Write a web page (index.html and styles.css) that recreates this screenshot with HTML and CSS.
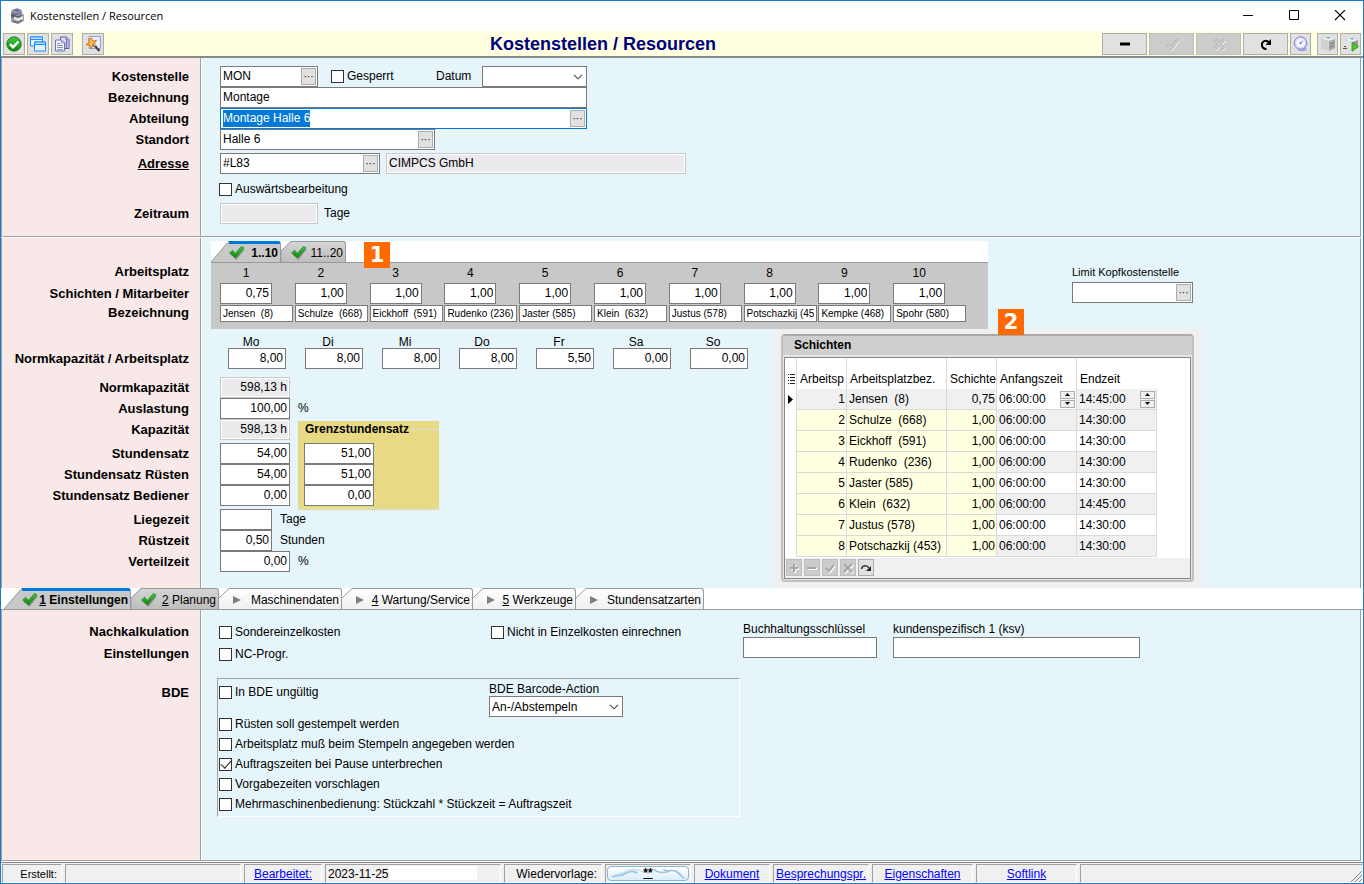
FILE: index.html
```html
<!DOCTYPE html>
<html lang="de">
<head>
<meta charset="utf-8">
<title>Kostenstellen / Resourcen</title>
<link rel="stylesheet" href="styles.css">
</head>
<body>
<svg class="defs" aria-hidden="true">
  <defs>
    <linearGradient id="green" x1="0" y1="0" x2="0" y2="1"><stop offset="0" stop-color="#3fc93f"/><stop offset="1" stop-color="#108410"/></linearGradient>
    <linearGradient id="pale" x1="0" y1="0" x2="0" y2="1"><stop offset="0" stop-color="#d4d4d4"/><stop offset="1" stop-color="#bebebe"/></linearGradient>
    <linearGradient id="light" x1="0" y1="0" x2="0" y2="1"><stop offset="0" stop-color="#ffffff"/><stop offset="1" stop-color="#efefef"/></linearGradient>
    <symbol id="tick" viewBox="0 0 16 16"><path d="M1 8.5 3.8 5.6 6.6 9 12.4 2 15.2 3.6 6.8 14Z" fill="#555" opacity=".45" transform="translate(.5 .9)"/><path d="M.6 8 3.6 5.2 6.4 8.4 12.4 1.4 15 2.8 6.600 13Z" fill="url(#green)" stroke="#1a8a1a" stroke-width=".7"/></symbol>
    <symbol id="play" viewBox="0 0 8 8"><path d="M0 0 8 4 0 8Z" fill="#808080"/></symbol>
    <symbol id="chevron" viewBox="0 0 10 6"><path d="M1 .8 5 4.8 9 .8" fill="none" stroke="#444" stroke-width="1.1"/></symbol>
    <symbol id="slant-wide" viewBox="0 0 20 21" preserveAspectRatio="none"><path d="M0 21 20 0V21Z" fill="#c8c8c8"/><path d="M0 21 20 0" stroke="#999" fill="none"/></symbol>
    <symbol id="slant-mid" viewBox="0 0 10 21"><path d="M0 21V10L10 0V21Z" fill="url(#pale)"/><path d="M0 21V10L10 .5" stroke="#999" fill="none"/></symbol>
    <symbol id="slant-light" viewBox="0 0 10 21"><path d="M0 21V10L10 0V21Z" fill="url(#light)"/><path d="M0 10 10 .5" stroke="#999" fill="none"/></symbol>
  </defs>
</svg>

<div class="window">
  <header class="titlebar">
    <svg class="app-icon" viewBox="0 0 16 16"><path d="M3 2 8 0l5 2v3l2 2v6l-6 3-7-2V4Z" fill="#a0a0a6"/><path d="m3 2 5-1 4 1-4 2Z" fill="#6a6ab0"/><path d="M3 4l5 1 4-1v2l-5 1-4-1Z" fill="#77779a"/><path d="M2 6h3l3 2 5-1v2l-5 2-6-2Z" fill="#606068"/><path d="M5 8.500l4 1.500 5-2v3l-5 2-4-2Z" fill="#e6e6e6"/><path d="m4 12.500 5 1 4-2v2l-4 2-5-1Z" fill="#77777d"/></svg>
    <span class="window-title">Kostenstellen / Resourcen</span>
    <button class="win-btn" aria-label="Minimieren"><svg viewBox="0 0 12 12"><path d="M1 5.500h10" stroke="#000"/></svg></button>
    <button class="win-btn" aria-label="Maximieren"><svg viewBox="0 0 12 12"><path d="M1.5.5h9v9h-9Z" fill="none" stroke="#000"/></svg></button>
    <button class="win-btn" aria-label="Schließen"><svg viewBox="0 0 12 12"><path d="m1 0 10 10M11 0 1 10" stroke="#000" stroke-width="1.1"/></svg></button>
  </header>

  <div class="toolbar">
    <div class="tools">
      <button class="tool" aria-label="OK"><svg viewBox="0 0 16 16"><circle cx="8" cy="8" r="7.2" fill="url(#green)" stroke="#0d720d" stroke-width=".8"/><path d="m4 8.2 3 3 5.4-5.6" fill="none" stroke="#fff" stroke-width="2.4"/></svg></button>
      <button class="tool" aria-label="Fenster"><svg viewBox="0 0 16 16"><path d="M.5 1h12v9H.5Z" fill="#e8f4ff" stroke="#1e90ff"/><path d="M.5 1h12v2.500H.5Z" fill="#c4e4ff" stroke="#1e90ff"/><path d="M4.500 6h11v9h-11Z" fill="#e4f3ff" stroke="#1e90ff"/><path d="M4.500 6h11v2.500h-11Z" fill="#a8d8ff" stroke="#1e90ff"/></svg></button>
      <button class="tool" aria-label="Kopieren"><svg viewBox="0 0 16 16"><path d="M6.500 1h6l2.500 2.500v9H6.500Z" fill="#dcdcf2" stroke="#6a5aa8"/><path d="M12 1.500v2.500h2.500" fill="none" stroke="#6a5aa8"/><path d="M12.500 5v7" stroke="#8264b4" stroke-width="1.500"/><path d="M1.500 4h6l3 3v8h-9Z" fill="#f2f5ff" stroke="#6678a8"/><path d="M3 7.500h3M3 9.500h6M3 11.500h6M3 13.500h6M7.500 4.500V7H10" fill="none" stroke="#8898c0"/></svg></button>
      <button class="tool tool-wizard" aria-label="Assistent"><svg viewBox="0 0 16 16"><path d="M4 .5h11.500v12H4Z" fill="#e6edfb" stroke="#90a4cc"/><path d="m6.500 2 1.300 3.200 3.600-.8-2 3 2 3-3.500-.7L6 13l-.9-3.600L1 8.600l3.200-1.800L3.800 3Z" fill="#ffbe3c" stroke="#cf6a14" stroke-width=".9"/><path d="m8 8 6.500 7" stroke="#444" stroke-width="2.300"/><path d="m8.500 8 2 2.200" stroke="#ddd" stroke-width="1.200"/></svg></button>
    </div>
    <h1 class="heading">Kostenstellen / Resourcen</h1>
    <div class="tools">
      <button class="tool wide" aria-label="Löschen"><svg viewBox="0 0 16 16"><path d="M3 6.500h10v3H3Z"/></svg></button>
      <button class="tool wide off" disabled aria-label="Speichern"><svg viewBox="0 0 16 16"><path d="m2.500 9.500 2-2L7 10l5.500-7 2 1.500L7.200 14Z" fill="none" stroke="#fff" transform="translate(.7 .7)"/><path d="m2.500 9.500 2-2L7 10l5.500-7 2 1.500L7.200 14Z" fill="#ccc" stroke="#aaa" stroke-width=".8"/></svg></button>
      <button class="tool wide off" disabled aria-label="Verwerfen"><svg viewBox="0 0 16 16"><path d="m3 5 2-2 3.300 3.300L11.600 3l2 2-3.300 3.300 3.300 3.300-2 2-3.300-3.300L5 13.600l-2-2 3.300-3.300Z" fill="none" stroke="#fff" transform="translate(.7 .7)"/><path d="m3 5 2-2 3.300 3.300L11.600 3l2 2-3.300 3.300 3.300 3.300-2 2-3.300-3.300L5 13.600l-2-2 3.300-3.300Z" fill="#ccc" stroke="#aaa" stroke-width=".8"/></svg></button>
      <button class="tool wide" aria-label="Aktualisieren"><svg viewBox="0 0 16 16"><path d="M8.500 13C2.500 13 2.500 4.800 7.800 4.800c2 0 2.800.8 3.500 2.200" fill="none" stroke="#000" stroke-width="2"/><path d="M13 3v6H7.500Z"/></svg></button>
      <button class="tool small" aria-label="Uhr"><svg viewBox="0 0 16 16"><ellipse cx="9" cy="13" rx="4.500" ry="2.200" fill="#a6a6de"/><circle cx="7.500" cy="7" r="6.300" fill="#cfd4fa" stroke="#8888cc"/><circle cx="7.500" cy="7" r="4.500" fill="#f4f6ff"/><path d="M7.500 7 10 4.500" stroke="#8b8bc4"/><circle cx="7.500" cy="7" r="1" fill="#6b6bb4"/></svg></button>
      <button class="tool small box" aria-label="Ablage"><svg viewBox="0 0 16 16"><path d="m1 3 6-2 8 2v9l-6 3-8-3Z" fill="#a8a8a8"/><path d="m1 3 6-2 8 2-6 2Z" fill="#f0f0f0"/><path d="M1 3v9l8 3V5Z" fill="#d2d2d2"/><path d="m6 1.500 2.500-.5 2 .7L8 3Z" fill="#55b8c8"/><path d="m10 8 4-1.500M10 11l4-1.500" stroke="#808080"/></svg></button>
      <button class="tool small" aria-label="Ablage starten"><svg viewBox="0 0 16 16"><path d="m2 4 6-2 7 2v7l-6 3-7-3Z" fill="#999"/><path d="m2 4 6-2 7 2-6 2Z" fill="#f4f4f4"/><path d="M2 4v7l7 3V6Z" fill="#e2e2e2"/><path d="m7 2.500 2-.5 2 .7L9 4Z" fill="#55b8c8"/><path d="M0 12.500h4M1 10.500h2" stroke="#555"/><path d="m9 6.500 6.500 4L9 15.500Z" fill="#4fc92c" stroke="#22881a" stroke-width=".7"/></svg></button>
    </div>
  </div>

  <main class="main">
    <section class="band band-head">
      <div class="row">
        <label class="cap" for="kst">Kostenstelle</label>
        <div class="head-line">
          <div class="lookup w98"><input id="kst" value="MON"><button aria-label="Kostenstelle suchen">···</button></div>
          <label class="check"><input type="checkbox">Gesperrt</label>
          <label for="datum">Datum</label>
          <div class="combo"><select id="datum"><option></option></select><svg><use href="#chevron"/></svg></div>
        </div>
      </div>
      <div class="row"><label class="cap" for="bez">Bezeichnung</label><div><input class="field w367" id="bez" value="Montage"></div></div>
      <div class="row"><label class="cap" for="abt">Abteilung</label><div class="lookup w367 active"><input id="abt" value="Montage Halle 6"><button aria-label="Abteilung suchen">···</button></div></div>
      <div class="row"><label class="cap" for="ort">Standort</label><div class="lookup w215"><input id="ort" value="Halle 6"><button aria-label="Standort suchen">···</button></div></div>
      <div class="row gap"><label class="cap linked" for="adr">Adresse</label><div class="inline tight"><div class="lookup w160"><input id="adr" value="#L83"><button aria-label="Adresse suchen">···</button></div><input class="field ro w300" readonly value="CIMPCS GmbH" aria-label="Adressname"></div></div>
      <div class="row gap-l"><span></span><label class="check out"><input type="checkbox">Auswärtsbearbeitung</label></div>
      <div class="row gap"><label class="cap" for="zeit">Zeitraum</label><div class="inline tight"><input class="field ro w98" id="zeit" readonly><span>Tage</span></div></div>
    </section>

    <section class="band band-work">
      <div class="shifts">
        <div class="shift-caps"><span class="cap">Arbeitsplatz</span><span class="cap">Schichten / Mitarbeiter</span><span class="cap low">Bezeichnung</span></div>
        <div class="shift-panel">
          <div class="tabs tabs-shift" role="tablist">
            <button class="tab on" role="tab"><svg class="slant wide"><use href="#slant-wide"/></svg><span class="tab-body"><svg class="tick"><use href="#tick"/></svg>1..10</span></button>
            <button class="tab pale" role="tab"><svg class="slant"><use href="#slant-mid"/></svg><span class="tab-body"><svg class="tick"><use href="#tick"/></svg>11..20</span></button>
            <span class="badge badge-one">1</span>
          </div>
          <div class="places">
            <div class="place"><label for="p1">1</label><input class="field num" id="p1" value="0,75"><input class="field name" aria-label="Name 1" value="Jensen  (8)"></div>
            <div class="place"><label for="p2">2</label><input class="field num" id="p2" value="1,00"><input class="field name" aria-label="Name 2" value="Schulze  (668)"></div>
            <div class="place"><label for="p3">3</label><input class="field num" id="p3" value="1,00"><input class="field name" aria-label="Name 3" value="Eickhoff  (591)"></div>
            <div class="place"><label for="p4">4</label><input class="field num" id="p4" value="1,00"><input class="field name" aria-label="Name 4" value="Rudenko (236)"></div>
            <div class="place"><label for="p5">5</label><input class="field num" id="p5" value="1,00"><input class="field name" aria-label="Name 5" value="Jaster (585)"></div>
            <div class="place"><label for="p6">6</label><input class="field num" id="p6" value="1,00"><input class="field name" aria-label="Name 6" value="Klein  (632)"></div>
            <div class="place"><label for="p7">7</label><input class="field num" id="p7" value="1,00"><input class="field name" aria-label="Name 7" value="Justus (578)"></div>
            <div class="place"><label for="p8">8</label><input class="field num" id="p8" value="1,00"><input class="field name" aria-label="Name 8" value="Potschazkij (453)"></div>
            <div class="place"><label for="p9">9</label><input class="field num" id="p9" value="1,00"><input class="field name" aria-label="Name 9" value="Kempke (468)"></div>
            <div class="place"><label for="p10">10</label><input class="field num" id="p10" value="1,00"><input class="field name" aria-label="Name 10" value="Spohr (580)"></div>
          </div>
        </div>
        <div class="limit"><label for="limit">Limit Kopfkostenstelle</label><div class="lookup w121"><input id="limit"><button aria-label="Kopfkostenstelle suchen">···</button></div></div>
      </div>

      <div class="capacity">
        <div class="capacity-form">
          <div class="row days-row"><span class="cap">Normkapazität / Arbeitsplatz</span>
            <div class="days">
              <div class="day"><label for="mo">Mo</label><input class="field num" id="mo" value="8,00"></div>
              <div class="day"><label for="di">Di</label><input class="field num" id="di" value="8,00"></div>
              <div class="day"><label for="mi">Mi</label><input class="field num" id="mi" value="8,00"></div>
              <div class="day"><label for="do">Do</label><input class="field num" id="do" value="8,00"></div>
              <div class="day"><label for="fr">Fr</label><input class="field num" id="fr" value="5,50"></div>
              <div class="day"><label for="sa">Sa</label><input class="field num" id="sa" value="0,00"></div>
              <div class="day"><label for="so">So</label><input class="field num" id="so" value="0,00"></div>
            </div>
          </div>
          <div class="row gap-xl"><label class="cap" for="nk">Normkapazität</label><input class="field num ro w70" id="nk" readonly value="598,13 h"></div>
          <div class="row"><label class="cap" for="al">Auslastung</label><div class="inline"><input class="field num w70" id="al" value="100,00"><span>%</span></div></div>
          <div class="rates">
            <div>
              <div class="row"><label class="cap" for="kp">Kapazität</label><input class="field num ro w70" id="kp" readonly value="598,13 h"></div>
              <div class="row gap"><label class="cap" for="s1">Stundensatz</label><input class="field num w70" id="s1" value="54,00"></div>
              <div class="row"><label class="cap" for="s2">Stundensatz Rüsten</label><input class="field num w70" id="s2" value="54,00"></div>
              <div class="row"><label class="cap" for="s3">Stundensatz Bediener</label><input class="field num w70" id="s3" value="0,00"></div>
            </div>
            <div class="marginal" role="group" aria-labelledby="gs">
              <div class="marginal-head"><span id="gs">Grenzstundensatz</span></div>
              <div class="marginal-fields">
                <input class="field num w70" aria-label="Grenzstundensatz" value="51,00">
                <input class="field num w70" aria-label="Grenzstundensatz Rüsten" value="51,00">
                <input class="field num w70" aria-label="Grenzstundensatz Bediener" value="0,00">
              </div>
            </div>
          </div>
          <div class="row gap"><label class="cap" for="lz">Liegezeit</label><div class="inline"><input class="field num w52" id="lz"><span>Tage</span></div></div>
          <div class="row"><label class="cap" for="rz">Rüstzeit</label><div class="inline"><input class="field num w52" id="rz" value="0,50"><span>Stunden</span></div></div>
          <div class="row"><label class="cap" for="vz">Verteilzeit</label><div class="inline"><input class="field num w70" id="vz" value="0,00"><span>%</span></div></div>
        </div>

        <div class="sheet">
          <span class="badge badge-two">2</span>
          <div class="sheet-frame">
            <h2 class="sheet-title">Schichten</h2>
            <div class="sheet-box">
              <div class="sheet-scroll">
              <table class="grid">
                <colgroup><col class="c12"><col class="c50"><col class="c100"><col class="c50"><col class="c80"><col class="c80"></colgroup>
                <thead><tr><th><svg class="list" viewBox="0 0 8 10"><path d="M0 .5h1M0 3.500h1M0 6.500h1M0 9.500h1M2 .5h5M2 3.500h5M2 6.500h5M2 9.500h5" stroke="#222"/></svg></th><th>Arbeitsp</th><th>Arbeitsplatzbez.</th><th>Schichte</th><th>Anfangszeit</th><th>Endzeit</th></tr></thead>
                <tbody>
                  <tr class="cur"><td><svg class="marker" viewBox="0 0 5 9"><path d="M0 0 5 4.500 0 9Z"/></svg></td><td class="r">1</td><td>Jensen&nbsp; (8)</td><td class="r">0,75</td><td><div class="time">06:00:00<span class="spin"><button aria-label="Später"><svg viewBox="0 0 5 3"><path d="M0 3 2.500 0 5 3Z"/></svg></button><button aria-label="Früher"><svg viewBox="0 0 5 3"><path d="M0 0h5L2.500 3Z"/></svg></button></span></div></td><td><div class="time">14:45:00<span class="spin"><button aria-label="Später"><svg viewBox="0 0 5 3"><path d="M0 3 2.500 0 5 3Z"/></svg></button><button aria-label="Früher"><svg viewBox="0 0 5 3"><path d="M0 0h5L2.500 3Z"/></svg></button></span></div></td></tr>
                  <tr><td></td><td class="r">2</td><td>Schulze&nbsp; (668)</td><td class="r">1,00</td><td>06:00:00</td><td>14:30:00</td></tr>
                  <tr><td></td><td class="r">3</td><td>Eickhoff&nbsp; (591)</td><td class="r">1,00</td><td>06:00:00</td><td>14:30:00</td></tr>
                  <tr><td></td><td class="r">4</td><td>Rudenko&nbsp; (236)</td><td class="r">1,00</td><td>06:00:00</td><td>14:30:00</td></tr>
                  <tr><td></td><td class="r">5</td><td>Jaster (585)</td><td class="r">1,00</td><td>06:00:00</td><td>14:30:00</td></tr>
                  <tr><td></td><td class="r">6</td><td>Klein&nbsp; (632)</td><td class="r">1,00</td><td>06:00:00</td><td>14:45:00</td></tr>
                  <tr><td></td><td class="r">7</td><td>Justus (578)</td><td class="r">1,00</td><td>06:00:00</td><td>14:30:00</td></tr>
                  <tr><td></td><td class="r">8</td><td>Potschazkij (453)</td><td class="r">1,00</td><td>06:00:00</td><td>14:30:00</td></tr>
                </tbody>
              </table>
              </div>
              <div class="sheet-tools">
                <button disabled aria-label="Neu"><svg viewBox="0 0 12 12"><path d="M3 7h8M7 3v8" stroke="#fff" stroke-width="2"/><path d="M2 6h8M6 2v8" stroke="#a5a5a5" stroke-width="2"/></svg></button>
                <button disabled aria-label="Löschen"><svg viewBox="0 0 12 12"><path d="M2 7h9" stroke="#fff" stroke-width="2"/><path d="M1 6h9" stroke="#a5a5a5" stroke-width="2"/></svg></button>
                <button disabled aria-label="Speichern"><svg viewBox="0 0 12 12"><path d="m3 7 3 3 5-6" fill="none" stroke="#fff" stroke-width="2"/><path d="m2 6 3 3 5-6" fill="none" stroke="#a5a5a5" stroke-width="2"/></svg></button>
                <button disabled aria-label="Verwerfen"><svg viewBox="0 0 12 12"><path d="m3 3 8 8M11 3l-8 8" stroke="#fff" stroke-width="2"/><path d="m2 2 8 8M10 2l-8 8" stroke="#a5a5a5" stroke-width="2"/></svg></button>
                <button aria-label="Aktualisieren"><svg viewBox="0 0 12 12"><path d="M1.500 7C2 3 7 2.500 9 6" fill="none" stroke="#333" stroke-width="1.500"/><path d="M11 4v5H6Z" fill="#222"/></svg></button>
              </div>
            </div>
          </div>
        </div>
      </div>
    </section>

    <div class="tabs tabs-main" role="tablist">
      <button class="tab on" role="tab"><svg class="slant wide"><use href="#slant-wide"/></svg><span class="tab-body"><svg class="tick"><use href="#tick"/></svg><span><u>1</u> Einstellungen</span></span></button>
      <button class="tab pale" role="tab"><svg class="slant"><use href="#slant-mid"/></svg><span class="tab-body"><svg class="tick"><use href="#tick"/></svg><span><u>2</u> Planung</span></span></button>
      <button class="tab" role="tab"><svg class="slant"><use href="#slant-light"/></svg><span class="tab-body"><svg class="play"><use href="#play"/></svg>Maschinendaten</span></button>
      <button class="tab" role="tab"><svg class="slant"><use href="#slant-light"/></svg><span class="tab-body"><svg class="play"><use href="#play"/></svg><span><u>4</u> Wartung/Service</span></span></button>
      <button class="tab" role="tab"><svg class="slant"><use href="#slant-light"/></svg><span class="tab-body"><svg class="play"><use href="#play"/></svg><span><u>5</u> Werkzeuge</span></span></button>
      <button class="tab" role="tab"><svg class="slant"><use href="#slant-light"/></svg><span class="tab-body"><svg class="play"><use href="#play"/></svg>Stundensatzarten</span></button>
    </div>

    <section class="band band-settings">
      <div class="settings-top">
        <div class="settings-caps"><span class="cap">Nachkalkulation</span><span class="cap">Einstellungen</span></div>
        <div class="settings-checks">
          <label class="check"><input type="checkbox">Sondereinzelkosten</label>
          <label class="check"><input type="checkbox">Nicht in Einzelkosten einrechnen</label>
          <label class="check"><input type="checkbox">NC-Progr.</label>
        </div>
        <div class="stacked w134"><label for="bs">Buchhaltungsschlüssel</label><input class="field" id="bs"></div>
        <div class="stacked w247"><label for="ksv">kundenspezifisch 1 (ksv)</label><input class="field" id="ksv"></div>
      </div>
      <div class="bde">
        <span class="cap">BDE</span>
        <div class="bde-box">
          <div class="bde-first">
            <label class="check"><input type="checkbox">In BDE ungültig</label>
            <div class="stacked w134"><label for="bar">BDE Barcode-Action</label><div class="combo"><select id="bar"><option>An-/Abstempeln</option></select><svg><use href="#chevron"/></svg></div></div>
          </div>
          <label class="check"><input type="checkbox">Rüsten soll gestempelt werden</label>
          <label class="check"><input type="checkbox">Arbeitsplatz muß beim Stempeln angegeben werden</label>
          <label class="check"><input type="checkbox" checked>Auftragszeiten bei Pause unterbrechen</label>
          <label class="check"><input type="checkbox">Vorgabezeiten vorschlagen</label>
          <label class="check"><input type="checkbox">Mehrmaschinenbedienung: Stückzahl * Stückzeit = Auftragszeit</label>
        </div>
      </div>
    </section>
  </main>

  <footer class="status">
    <span class="cell right small">Erstellt:</span>
    <span class="cell"></span>
    <span class="cell"><a href="#">Bearbeitet:</a></span>
    <span class="cell date"><span>2023-11-25</span><i></i></span>
    <span class="cell right">Wiedervorlage:</span>
    <span class="cell flush"><button class="wave" aria-label="Wiedervorlage"><svg viewBox="0 0 84 17" preserveAspectRatio="none"><path d="M4 13c6-3 10 0 15-5 4-3 8-3 12 0M48 3c5 6 14 5 18 1M58 3c6 5 10-2 15 4 3 3 5 6 7 8" fill="none" stroke="#9cc3e2" stroke-width="2"/><path d="M6 10c8 1 14-6 20-7 7 0 12 6 18 4" fill="none" stroke="#c2dff2" stroke-width="2"/></svg><u>**</u></button></span>
    <span class="cell"><a href="#">Dokument</a></span>
    <span class="cell"><a href="#">Besprechungspr.</a></span>
    <span class="cell"><a href="#">Eigenschaften</a></span>
    <span class="cell"><a href="#">Softlink</a></span>
    <span class="cell grip"><svg viewBox="0 0 12 12"><path d="M1 12 12 1M5 12l7-7M9 12l3-3" stroke="#888"/></svg></span>
  </footer>
</div>
<script src="app.js"></script>
</body>
</html>
```
FILE: styles.css
```css
* { box-sizing: border-box; }
html, body { height: 100%; }
body { margin: 0; font: 12px/21px "Liberation Sans", Arial, sans-serif; color: #000; }
button, input, select { font: inherit; color: inherit; margin: 0; padding: 0; border-radius: 0; }
button { display: flex; align-items: center; justify-content: center; background: none; border: 0; }
svg { display: block; flex: none; }
a { color: #0000ff; }
.defs { position: absolute; width: 0; height: 0; }

.window { min-height: 100vh; display: flex; flex-direction: column; border: 1px solid #1979ca; background: #fff; }

/* title bar */
.titlebar { display: flex; align-items: center; height: 30px; padding-left: 8px; background: #fff; }
.app-icon { width: 16px; height: 16px; }
.window-title { flex: 1; padding-left: 5px; font: 11px/30px "Open Sans", "Noto Sans", sans-serif; }
.win-btn { width: 46px; height: 28px; }
.win-btn svg { width: 12px; height: 12px; }

/* toolbar */
.toolbar { display: flex; align-items: center; height: 25px; padding: 1px 2px 0; background: #ffffe1; }
.tools { display: flex; gap: 2px; }
.tool { width: 22px; height: 22px; background: #e1e1e1; border: 1px solid #adadad; }
.tool svg { width: 16px; height: 16px; }
.tool-wizard { margin-left: 7px; }
.tool.wide { width: 45px; }
.tool.small { width: 21px; }
.tool.box { margin-left: 4px; }
.tool.off { background: #ccc; border-color: #bfbfbf; }
.heading { flex: 1; margin: 0; text-align: center; font-size: 18px; line-height: 24px; color: #00007f; }

/* bands with a rose caption column */
.main { flex: 1; display: flex; flex-direction: column; border-top: 2px solid #8a8a8a; }
.band {
  border-right: 1px solid #a0a0a0; border-left: 1px solid #a0a0a0; margin-right: 2px; border-bottom: 1px solid #a0a0a0;
  background: linear-gradient(to right, #f8e8e8 198px, #a0a0a0 198px, #a0a0a0 199px, #fff 199px, #fff 200px, #e6f5fa 200px);
}
.band-head { padding: 8px 0 12px; }
.band-work { margin-top: 1px; border-bottom: 0; }
.row { display: grid; grid-template-columns: 187px minmax(0, 1fr); column-gap: 31px; min-height: 21px; }
.cap { font-weight: bold; font-size: 13px; line-height: 21px; text-align: right; white-space: nowrap; }
.linked { text-decoration: underline; }
.gap { margin-top: 3px; }
.gap-l { margin-top: 5px; }
.gap-xl { margin-top: 8px; }
.inline { display: flex; gap: 8px; }
.inline.tight { gap: 6px; }
.head-line { display: grid; grid-template-columns: 111px 105px 46px 105px; }

/* fields */
.field, .lookup, .combo { height: 21px; border: 1px solid #7a7a7a; background: #fff; }
.field { display: block; padding: 0 2px; min-width: 0; }
.field.ro { background: #ebebed; border-color: #c8c8c8; box-shadow: inset 0 0 0 1px #fff; }
.num { text-align: right; }
.lookup { display: flex; align-items: center; padding-right: 1px; }
.lookup input { flex: 1; min-width: 0; height: 17px; border: 0; padding: 0 2px; background: none; outline: 0; }
.lookup button { width: 15px; height: 17px; background: #e1e1e1; border: 1px solid #adadad; font-size: 10px; line-height: 12px; }
.lookup.active { border-color: #0078d7; }
.combo { position: relative; }
.combo select { appearance: none; width: 100%; height: 100%; border: 0; padding: 0 2px; background: none; line-height: 19px; }
.combo svg { position: absolute; right: 3px; top: 7px; width: 10px; height: 6px; pointer-events: none; }
::selection { background: rgba(0, 120, 215, .99); color: #fff; }
.w52 { width: 52px; }
.w70 { width: 70px; }
.w98 { width: 98px; }
.w121 { width: 121px; }
.w134 { width: 134px; }
.w160 { width: 160px; }
.w215 { width: 215px; }
.w247 { width: 247px; }
.w300 { width: 300px; }
.w367 { width: 367px; }

.check { display: flex; align-items: center; gap: 3px; white-space: nowrap; }
.check.out { margin-left: -1px; }
.check input { appearance: none; flex: none; width: 13px; height: 13px; border: 1px solid #333; background: #fff; display: grid; place-items: center; }
.check input:checked::before { content: ""; width: 5px; height: 9px; margin-top: -3px; border: solid #222; border-width: 0 1px 1px 0; transform: rotate(42deg); }

/* shift assignment */
.shifts { display: grid; grid-template-columns: 187px 777px minmax(0, 1fr); }
.shift-caps { display: flex; flex-direction: column; padding-top: 23px; }
.shift-caps .cap:nth-child(2) { margin-top: 1px; }
.cap.low { line-height: 18px; }
.shift-panel { margin: 3px 0 0 22px; width: 777px; background: #c8c8c8; }
.tabs { display: grid; background: #fff; border-bottom: 1px solid #999; }
.tabs-shift { position: relative; grid-template-columns: 70px 65px; }
.tab { height: 21px; justify-content: flex-start; white-space: nowrap; }
.slant { width: 10px; height: 21px; }
.slant.wide { width: 18px; }
.tab-body { flex: 1; height: 21px; display: flex; align-items: center; justify-content: space-between; padding: 2px 2px 0 0; border-top: 1px solid #999; border-right: 1px solid #999; border-radius: 0 3px 0 0; background: linear-gradient(#fff, #efefef); line-height: 18px; }
.pale .tab-body { background: linear-gradient(#d4d4d4, #bebebe); }
.on .tab-body { background: #c8c8c8; border-top: 3px solid #0078d7; padding-top: 0; font-weight: bold; }
.tick { width: 16px; height: 16px; }
.play { width: 8px; height: 8px; margin-left: 4px; }
.badge { position: absolute; width: 26px; height: 26px; background: #ff6a00; color: #fff; font: bold 21px/26px "DejaVu Sans", sans-serif; text-align: center; }
.badge-one { left: 153px; top: 1px; }
.badge-two { right: 179px; top: -20px; }
.places { display: grid; grid-template-columns: repeat(10, 1fr); padding: 0 20px 7px 9px; }
.place label { display: block; width: 52px; height: 20px; text-align: center; }
.place .num { width: 52px; }
.place .name { width: 73px; height: 17px; margin-top: 1px; font-size: 10px; }
.limit { padding: 25px 0 0 106px; }
.limit label { display: block; font-size: 11px; line-height: 19px; white-space: nowrap; }

/* capacity */
.capacity { display: grid; grid-template-columns: 771px 430px; }
.capacity-form { padding: 7px 0 15px; }
.days-row { align-items: end; }
.days { display: flex; gap: 19px; padding-left: 8px; }
.day { width: 58px; }
.day label { display: block; line-height: 12px; text-align: center; padding-right: 12px; }
.day .field { width: 58px; }
.rates { display: flex; gap: 8px; }
.marginal { width: 141px; height: 89px; margin: 2px 0 -4px; background: #e8da84; }
.marginal-head { display: flex; align-items: center; gap: 2px; height: 16px; margin-bottom: 6px; padding-left: 7px; font-weight: bold; line-height: 16px; }
.marginal-head::after { content: ""; flex: 1; border-top: 1px solid #dcdcdc; }
.marginal-fields { padding: 0 0 2px 6px; border-bottom: 1px solid #dcdcdc; }

.sheet { position: relative; padding: 5px 9px 6px 8px; background: #f0f0f1; }
.sheet-frame { border: 2px solid #c0c0c0; border-top-color: #aaa; border-radius: 4px; background: #e6e6e6; padding-bottom: 1px; }
.sheet-title { margin: 0 0 2px; height: 19px; padding-left: 11px; background: #cfcfcf; font-size: 12px; line-height: 19px; }
.sheet-box { margin: 0 1px; border: 1px solid #828790; background: #fff; }
.sheet-scroll { height: 200px; overflow: hidden; }
.grid { border-collapse: separate; border-spacing: 0; table-layout: fixed; width: 372px; }
.c12 { width: 12px; }
.c50 { width: 50px; }
.c80 { width: 80px; }
.c100 { width: 100px; }
.grid th, .grid td { padding: 0 1px 0 2px; overflow: hidden; white-space: nowrap; text-align: left; border-right: 1px solid #dadada; }
.grid th { height: 31px; padding: 11px 0 0 3px; font-weight: normal; line-height: 20px; }
.grid th:last-child { border-right: 0; }
.grid td { height: 21px; line-height: 20px; border-bottom: 1px solid #dadada; }
.grid td:first-child { border-bottom: 0; padding: 0 0 0 3px; background: #fff; }
.grid .r { text-align: right; }
.grid td:nth-child(n+2):nth-child(-n+4) { background: #ffffe1; }
.grid tr:nth-child(even) td:nth-child(n+5) { background: #f0f0f0; }
.grid .cur td:nth-child(n+2) { background: #f0f0f0; }
.grid .cur td:nth-child(5) { background: #fff; }
.list { width: 8px; height: 10px; }
.marker { width: 5px; height: 9px; }
.time { display: flex; justify-content: space-between; align-items: center; height: 20px; }
.spin { display: flex; flex-direction: column; gap: 1px; }
.spin button { width: 15px; height: 8px; border: 1px solid #adadad; background: #f0f0f0; }
.spin svg { width: 5px; height: 3px; }
.sheet-tools { display: flex; gap: 2px; height: 20px; padding: 1px; background: #f0f0f0; }
.sheet-tools button { width: 16px; height: 17px; background: #e1e1e1; border: 1px solid #adadad; }
.sheet-tools button:disabled { background: #ccc; border-color: #bfbfbf; }
.sheet-tools svg { width: 12px; height: 12px; }

/* settings */
.tabs-main { grid-template-columns: 127px 88px 123px 131px 103px 128px; padding-left: 3px; }
.band-settings { flex: 1; padding-top: 11px; }
.settings-top { display: grid; grid-template-columns: 187px 554px 150px 247px; }
.settings-caps, .stacked { display: flex; flex-direction: column; }
.settings-caps .cap { line-height: 22px; }
.settings-checks { display: grid; grid-template-columns: 272px auto; grid-auto-rows: 22px; padding-left: 30px; align-content: start; justify-content: start; }
.stacked label { line-height: 13px; white-space: nowrap; }
.settings-top .stacked label { line-height: 16px; }
.bde { display: grid; grid-template-columns: 187px 523px; column-gap: 28px; padding-top: 13px; }
.bde > .cap { padding-top: 4px; }
.bde-box { border: 1px solid #a0a0a0; border-color: #a0a0a0 #fff #fff #a0a0a0; padding: 0 0 2px 1px; }
.bde-box > .check { height: 20px; }
.bde-first { display: grid; grid-template-columns: 270px 134px; height: 35px; }
.bde-first .check { height: 27px; }
.bde-first .stacked { padding-top: 3px; }
.bde-first .stacked label { line-height: 14px; }

/* status bar */
.status { display: grid; grid-template-columns: 60px 176px 78px 176px 98px 86px 76px 96px 101px 101px 1fr; gap: 3px; height: 21px; margin-top: 1px; padding: 1px 0 0 1px; border-top: 1px solid #858585; background: #f0f0f0; }
.cell { display: flex; justify-content: center; border: 1px solid #a0a0a0; border-color: #a0a0a0 #fff #fff #a0a0a0; line-height: 18px; white-space: nowrap; overflow: hidden; }
.cell.right { justify-content: flex-end; padding-right: 4px; }
.cell.small { font-size: 11px; }
.date { justify-content: flex-start; padding-left: 2px; background: #f0f0f0; }
.date i { width: 88px; height: 14px; margin-top: 1px; background: #fff; }
.cell.flush { padding: 1px; }
.wave { position: relative; width: 100%; height: 15px; border: 1px solid #8ab4d8; border-radius: 4px; background: linear-gradient(#fff, #dcedf9); }
.wave svg { position: absolute; inset: 0; width: 100%; height: 100%; }
.wave u { position: relative; font-weight: bold; line-height: 13px; }
.grip { justify-content: flex-end; align-items: flex-end; }
.grip svg { width: 12px; height: 12px; }
```
FILE: app.js
```js
const department = document.getElementById('abt');
department.focus();
department.select();
```
